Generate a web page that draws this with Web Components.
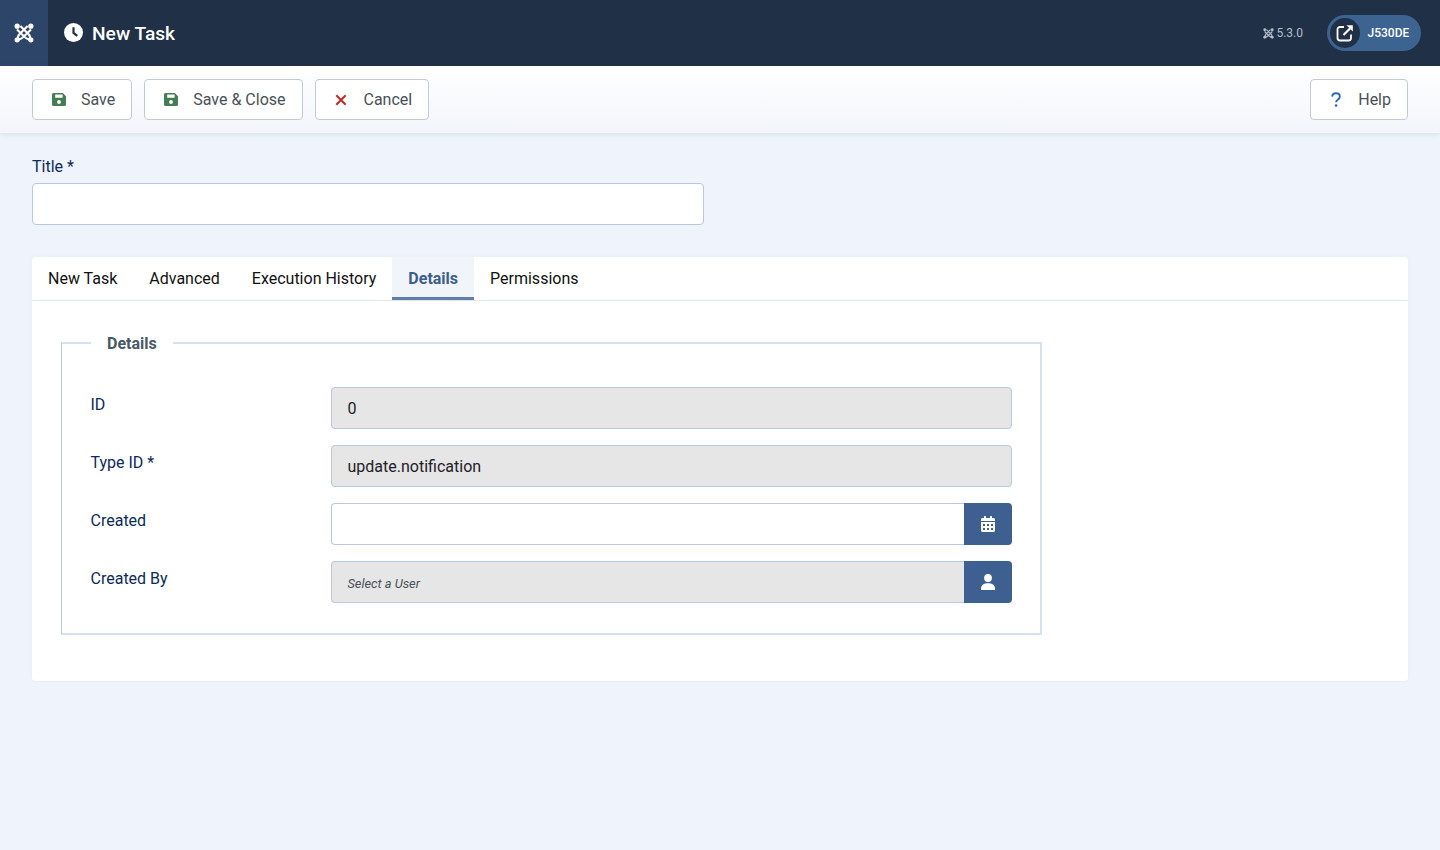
<!DOCTYPE html>
<html lang="en"><head><meta charset="utf-8"><title>New Task</title>
<style>
html,body{margin:0;padding:0}
body{background:#eff4fc;font:16px/1.5 Roboto,"Liberation Sans",sans-serif;color:#0c2a5b;height:850px;overflow:hidden}
</style></head><body>
<app-header title-text="New Task"></app-header>
<app-toolbar>
  <tool-button icon="save">Save</tool-button>
  <tool-button icon="save">Save &amp; Close</tool-button>
  <tool-button icon="cancel">Cancel</tool-button>
  <tool-button icon="help" slot="end">Help</tool-button>
</app-toolbar>
<task-page>
  <form-title></form-title>
  <tab-card active="Details">
    <details-fieldset legend="Details">
      <field-row label="ID"><text-box value="0" disabled></text-box></field-row>
      <field-row label="Type ID *"><text-box value="update.notification" disabled></text-box></field-row>
      <field-row label="Created"><text-box button="calendar"></text-box></field-row>
      <field-row label="Created By"><text-box value="Select a User" disabled placeholder-style button="user"></text-box></field-row>
    </details-fieldset>
  </tab-card>
</task-page>
<script>
const ICONS={
 save:'<svg width="14" height="13" viewBox="0 0 14 13" style="display:block"><path fill="#457d54" fill-rule="evenodd" d="M1.500 0H10.800L14 3.200V11.500A1.500 1.500 0 0 1 12.500 13H1.500A1.500 1.500 0 0 1 0 11.500V1.500A1.500 1.500 0 0 1 1.500 0ZM3.200 1.400V4.800H10.600V1.400ZM7 7.100A1.900 1.900 0 1 0 7 10.900 1.900 1.900 0 0 0 7 7.100Z"/></svg>',
 cancel:'<svg width="12" height="12" viewBox="0 0 12 12" style="display:block"><path d="M1.300 1.300 10.700 10.700M10.700 1.300 1.300 10.700" stroke="#c52827" stroke-width="2" fill="none"/></svg>',
 help:'<svg width="10" height="15" viewBox="0 0 10 15" style="display:block"><path d="M1.200 4.600C1.300 2.500 2.800 1.200 5 1.200c2.200 0 3.800 1.300 3.800 3.200 0 1.500-.8 2.300-1.900 3.100C5.700 8.300 5.100 9 5.100 10.300" stroke="#2a69b8" stroke-width="1.900" fill="none"/><circle cx="5.100" cy="13.500" r="1.300" fill="#2a69b8"/></svg>',
 calendar:'<svg width="14" height="16" viewBox="0 0 448 512" style="display:block"><path fill="#fff" d="M0 464c0 26.500 21.500 48 48 48h352c26.500 0 48-21.500 48-48V192H0v272zm320-196c0-6.600 5.400-12 12-12h40c6.600 0 12 5.400 12 12v40c0 6.600-5.400 12-12 12h-40c-6.600 0-12-5.400-12-12v-40zm0 128c0-6.600 5.400-12 12-12h40c6.600 0 12 5.400 12 12v40c0 6.600-5.400 12-12 12h-40c-6.600 0-12-5.400-12-12v-40zM192 268c0-6.600 5.400-12 12-12h40c6.600 0 12 5.400 12 12v40c0 6.600-5.400 12-12 12h-40c-6.600 0-12-5.400-12-12v-40zm0 128c0-6.600 5.400-12 12-12h40c6.600 0 12 5.400 12 12v40c0 6.600-5.400 12-12 12h-40c-6.600 0-12-5.400-12-12v-40zM64 268c0-6.600 5.400-12 12-12h40c6.600 0 12 5.400 12 12v40c0 6.600-5.400 12-12 12H76c-6.600 0-12-5.400-12-12v-40zm0 128c0-6.600 5.400-12 12-12h40c6.600 0 12 5.400 12 12v40c0 6.600-5.400 12-12 12H76c-6.600 0-12-5.400-12-12v-40zM400 64h-48V16c0-8.800-7.200-16-16-16h-32c-8.800 0-16 7.200-16 16v48H160V16c0-8.800-7.200-16-16-16h-32c-8.800 0-16 7.200-16 16v48H48C21.500 64 0 85.500 0 112v48h448v-48c0-26.500-21.500-48-48-48z"/></svg>',
 user:'<svg width="14" height="16" viewBox="0 0 14 16" style="display:block"><circle cx="7" cy="4" r="3.900" fill="#fff"/><path fill="#fff" d="M0 16V14.500C0 11 3 9.300 7 9.300S14 11 14 14.500V16Z"/></svg>'
};
const joomla=(s,c)=>`<svg width="${s}" height="${s}" viewBox="0 0 20 20" style="display:block"><g fill="none" stroke="${c}" stroke-width="2.100"><path d="M3 6.400 11.200 14.600M6.400 3 14.600 11.200M17 6.400 8.800 14.600M13.600 3 5.400 11.200"/><path d="M5.400 11.200C3.800 13 3.600 14.800 4.400 16M14.600 11.200C16.200 13 16.400 14.800 15.600 16M8.800 14.600 5 16.600M11.200 14.600 15 16.600"/></g><g fill="${c}"><circle cx="3.200" cy="3.200" r="2.600"/><circle cx="16.800" cy="3.200" r="2.600"/><circle cx="3.200" cy="16.800" r="2.600"/><circle cx="16.800" cy="16.800" r="2.600"/></g></svg>`;

class Base extends HTMLElement{
  render(css,html){const r=this.shadowRoot||this.attachShadow({mode:'open'});r.innerHTML=`<style>${css}</style>${html}`;}
}
customElements.define('app-header',class extends Base{connectedCallback(){this.render(`
:host{display:flex;align-items:center;height:66px;background:#1f3047;color:#fff}
.logo{width:48px;height:66px;background:#2d4568;display:flex;align-items:center;justify-content:center;flex:none}
.title{display:flex;align-items:center;gap:9px;margin-left:16px;font-size:19.2px;font-weight:500;line-height:1}
.title span{position:relative;top:1px}
.right{margin-left:auto;display:flex;align-items:center;margin-right:19px}
.ver{display:flex;align-items:center;gap:2px;font-size:12px;color:#b4bdc8;margin-right:24px}
.pill{display:flex;align-items:center;height:36px;width:94px;box-sizing:border-box;border-radius:18px;background:#3d6391;padding:3px;font-size:12px;font-weight:500}
.circ{width:30px;height:30px;border-radius:50%;background:#1f3047;display:flex;align-items:center;justify-content:center;flex:none}
.pill span{margin-left:7.500px}
`,`<div class="logo">${joomla(20,'#fff')}</div>
<div class="title"><svg width="19" height="19" viewBox="0 0 20 20" style="display:block"><circle cx="10" cy="10" r="10" fill="#fff"/><path d="M10 4.500V10.500L14 13.500" fill="none" stroke="#1f3047" stroke-width="2.300"/></svg><span>${this.getAttribute('title-text')}</span></div>
<div class="right"><div class="ver">${joomla(11,'#b4bdc8')}<span>5.3.0</span></div>
<div class="pill"><div class="circ"><svg width="18" height="18" viewBox="0 0 18 18" style="display:block"><path d="M8 3H4a2.500 2.500 0 0 0-2.500 2.500V14A2.500 2.500 0 0 0 4 16.500h8.500A2.500 2.500 0 0 0 15 14v-3.500" fill="none" stroke="#fff" stroke-width="1.800"/><path d="M7.500 11 15.500 3" stroke="#fff" stroke-width="2.200" fill="none"/><path d="M10.500 1.200h6.300v6.300z" fill="#fff"/></svg></div><span>J530DE</span></div></div>`);}});
customElements.define('app-toolbar',class extends Base{connectedCallback(){this.render(`
:host{display:flex;align-items:center;height:67px;box-sizing:border-box;padding:0 32px;gap:12px;background:linear-gradient(180deg,#fff 0%,#f2f5fb 100%);box-shadow:0 2px 6px rgba(30,50,90,.09);position:relative}
.end{margin-left:auto;display:flex}
`,`<slot></slot><div class="end"><slot name="end"></slot></div>`);}});
customElements.define('tool-button',class extends Base{connectedCallback(){const ic=this.getAttribute('icon');this.render(`
:host{display:block}
.b{display:flex;align-items:center;height:41px;box-sizing:border-box;padding:0 16px 0 0;border:1px solid #c3cad6;border-radius:4px;background:#fff;color:#495057;font-size:16px}
.i{width:48px;box-sizing:border-box;display:flex;justify-content:center;flex:none;padding-left:4px}
:host([icon=cancel]) .i{padding-left:2px}
:host([icon=help]) .i{width:47px;padding-left:3px}
`,`<div class="b"><span class="i">${ICONS[ic]}</span><span><slot></slot></span></div>`);}});
customElements.define('task-page',class extends Base{connectedCallback(){this.render(`:host{display:block;padding:22px 32px 0}`,`<slot></slot>`);}});
customElements.define('form-title',class extends Base{connectedCallback(){this.render(`
:host{display:block;margin-bottom:32px}
label{display:block;line-height:24px;margin-bottom:4px;color:#0c2a5b}
.i{width:672px;height:42px;box-sizing:border-box;border:1px solid #b9c8df;border-radius:4px;background:#fff}
`,`<label>Title *</label><div class="i" role="textbox"></div>`);}});
customElements.define('tab-card',class extends Base{connectedCallback(){const act=this.getAttribute('active');const tabs=['New Task','Advanced','Execution History','Details','Permissions'];this.render(`
:host{display:block;background:#fff;border-radius:4px;height:424px;box-shadow:0 0 4px rgba(30,50,90,.05)}
.bar{display:flex;height:44px;box-sizing:border-box;border-bottom:1px solid #dde5f0}
.t{padding:0 16px;height:43px;line-height:43px;box-sizing:border-box;color:#111}
.t.on{color:#3d5e8c;font-weight:700;background:#f1f5fa;border-bottom:3px solid #5f7ea8}
.p{padding:30px 29px 0}
`,`<div class="bar">${tabs.map(t=>`<div class="t${t===act?' on':''}">${t}</div>`).join('')}</div><div class="p"><slot></slot></div>`);}});
customElements.define('details-fieldset',class extends Base{connectedCallback(){this.render(`
:host{display:block;width:981px}
fieldset{margin:0;padding:32px 28px 30px 28.500px;border-style:solid;border-width:2px 2px 2px 1px;border-color:#d7e1ee #d7e1ee #d7e1ee #bcc7d8;min-width:0;display:flex;flex-direction:column;gap:16px;height:304px;box-sizing:border-box}
legend{padding:0 16px;font-weight:700;color:#495866;line-height:24px;margin-left:.5px}
legend span{position:relative;top:1px}
`,`<fieldset><legend><span>${this.getAttribute('legend')}</span></legend><slot></slot></fieldset>`);}});
customElements.define('field-row',class extends Base{connectedCallback(){this.render(`
:host{display:flex;height:42px}
label{width:240px;flex:none;line-height:24px;color:#0c2a5b;padding-top:6px}
.c{flex:1;min-width:0}
`,`<label>${this.getAttribute('label')}</label><div class="c"><slot></slot></div>`);}});
customElements.define('text-box',class extends Base{connectedCallback(){const v=this.getAttribute('value')||'';const b=this.getAttribute('button');this.render(`
:host{display:flex;height:42px;width:681.500px}
.i{flex:1;min-width:0;box-sizing:border-box;border:1px solid #b9c8df;border-radius:4px;padding:0 16px;line-height:41px;color:#1d2126;background:#fff;font-size:16px}
:host([disabled]) .i{background:#e6e6e6}
:host([button]) .i{border-radius:4px 0 0 4px;border-right:0}
:host([placeholder-style]) .i{font-style:italic;font-size:12.800px;color:#495057;line-height:43px}
.b{width:48px;flex:none;background:#3d6090;border-radius:0 4px 4px 0;display:flex;align-items:center;justify-content:center}
`,`<div class="i">${v}</div>${b?`<div class="b">${ICONS[b]}</div>`:''}`);}});
</script>
</body></html>
